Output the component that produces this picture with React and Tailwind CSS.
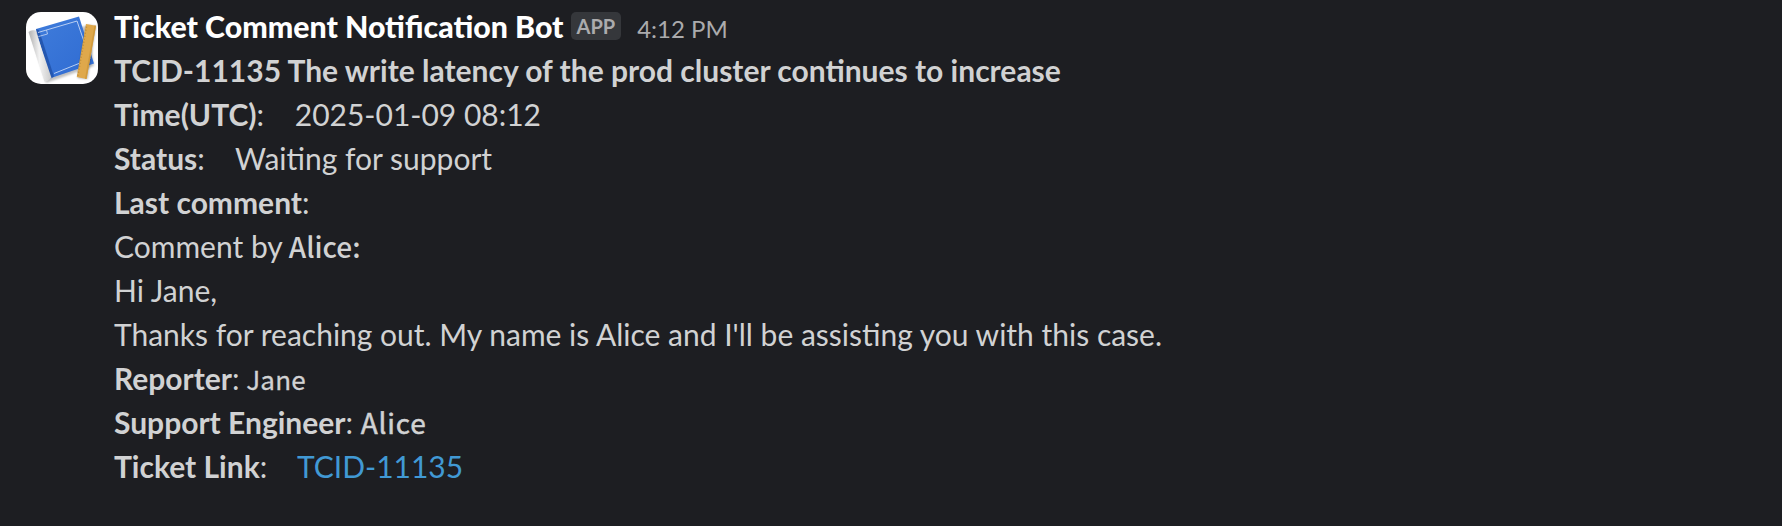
const B = ({ children }) => <span className="font-bold">{children}</span>;

const ticks = Array.from({ length: 17 }, (_, i) => i);

function Avatar() {
  return (
    <svg viewBox="0 0 72 72" className="mt-[8px] size-[72px] shrink-0 rounded-[15px] bg-white" aria-hidden="true">
      <defs>
        <linearGradient id="cover" x1="0" y1="0" x2="1" y2="1">
          <stop offset="0" stopColor="#3f7cdb" />
          <stop offset="1" stopColor="#2f6bd2" />
        </linearGradient>
        <linearGradient id="roll" x1="0" y1="0.04" x2="1" y2="0">
          <stop offset="0.1" stopColor="#bdbdbd" />
          <stop offset="0.45" stopColor="#f2f2f2" />
          <stop offset="0.9" stopColor="#cfcfcf" />
        </linearGradient>
        <filter id="soft" x="-20%" y="-20%" width="140%" height="140%">
          <feGaussianBlur stdDeviation="1.2" />
        </filter>
      </defs>
      <path d="M4 20L20 71L68 54L62 14Z" fill="#000" opacity="0.25" filter="url(#soft)" />
      <path d="M10 17L53 4.500L68 51.500L25 66Z" fill="url(#cover)" />
      <path d="M10 17L13 18L28 64.500L24 67Z" fill="#2457b0" />
      <path d="M12 20.500L51 9L64 47L28 61.500" fill="none" stroke="#c6d8f5" strokeWidth="0.9" />
      <path d="M12.500 24.500L21.500 22L20.500 18" fill="none" stroke="#c6d8f5" strokeWidth="0.8" />
      <path d="M2.500 20Q5 17.500 9.500 18.500L25.500 66Q22 69.500 18.500 69.500Z" fill="url(#roll)" />
      <path d="M60.500 13L70 14L61.500 67L51.500 66Z" fill="#000" opacity="0.3" filter="url(#soft)" />
      <path d="M60 12L70 13.700L60.500 67L50.800 65Z" fill="#dfa84b" />
      <path d="M68.500 13.400L70 13.700L60.500 67L59 66.700Z" fill="#d19a3c" />
      {ticks.map((i) => (
        <path key={i} d={`M${59.6 - i * 0.53} ${15 + i * 3}l1.500 0.300`} stroke="#a87a30" strokeWidth="0.7" />
      ))}
    </svg>
  );
}

export default function App() {
  return (
    <main className="flex h-[526px] w-[1782px] gap-4 bg-[#1d1e22] pl-[26px] pt-[4px] font-['Lato',sans-serif] text-[30px] leading-[44px] text-[#d1d2d3]">
      <Avatar />
      <div className="whitespace-pre">
        <div className="flex h-11 items-center">
          <span className="text-[30.27px] font-black text-white">Ticket Comment Notification Bot</span>
          <span className="ml-[7px] rounded-[5px] bg-[#35373b] px-[6px] text-[20px] leading-[28px] font-bold text-[#ababad]">APP</span>
          <span className="ml-4 mt-[5px] text-[24px] text-[#ababad]">4:12 PM</span>
        </div>
        <div className="h-11"><B>TCID-11135 The write latency of the prod cluster continues to increase</B></div>
        <div className="h-11"><B>Time(UTC)</B>:    2025-01-09 08:12</div>
        <div className="h-11"><B>Status</B>:    Waiting for support</div>
        <div className="h-11"><B>Last comment</B>:</div>
        <div className="h-11">Comment by <span className="-ml-px font-['Noto_Sans_CJK_SC',sans-serif] text-[28px] leading-none font-medium">Alice:</span></div>
        <div className="h-11">Hi Jane,</div>
        <div className="h-11">Thanks for reaching out. My name is Alice and I'll be assisting you with this case.</div>
        <div className="h-11"><B>Reporter</B>: <span className="-ml-px font-['Noto_Sans_CJK_SC',sans-serif] text-[26px] leading-none tracking-[0.2px] [-webkit-text-stroke:0.3px_#d1d2d3]">Jane</span></div>
        <div className="h-11"><B>Support Engineer</B>: <span className="font-['Noto_Sans_CJK_SC',sans-serif] text-[28px] leading-none tracking-[0.8px] [-webkit-text-stroke:0.5px_#d1d2d3]">Alice</span></div>
        <div className="h-11"><B>Ticket Link</B>:    <span className="text-[#4199d4]">TCID-11135</span></div>
      </div>
    </main>
  );
}
